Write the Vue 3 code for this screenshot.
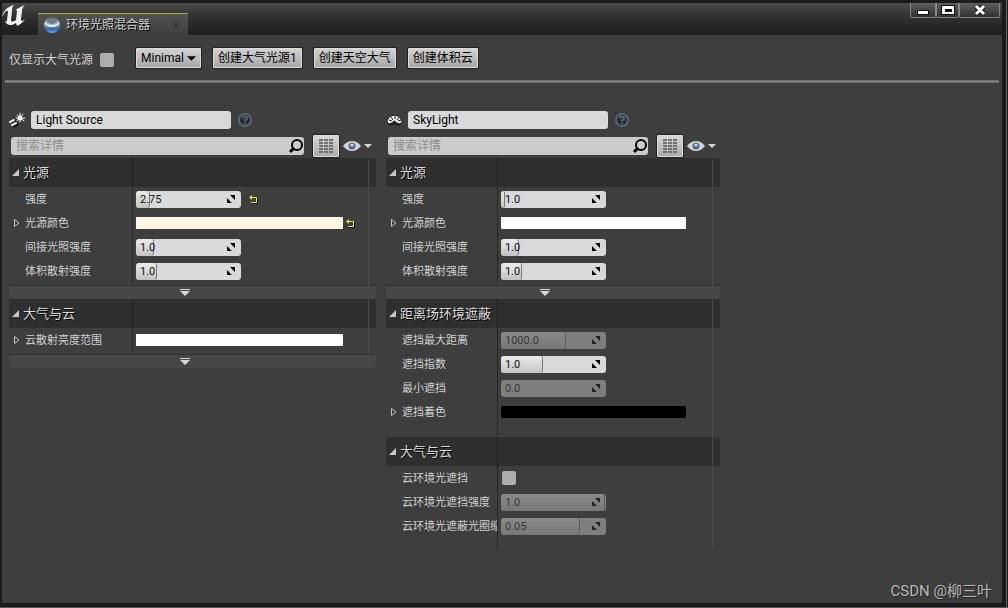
<script setup>
import { reactive, ref } from 'vue'

const onlyAtmosphere = ref(false)
const creators = ['创建大气光源1', '创建天空大气', '创建体积云']

const panels = reactive([
  {
    id: 'sun',
    name: 'Light Source',
    search: '',
    sections: [
      {
        title: '光源',
        more: true,
        rows: [
          { label: '强度', type: 'number', value: '2.75', fill: 13, reset: true },
          { label: '光源颜色', type: 'color', color: 'cream', expand: true, reset: true },
          { label: '间接光照强度', type: 'number', value: '1.0', fill: 17 },
          { label: '体积散射强度', type: 'number', value: '1.0', fill: 20 },
        ],
      },
      {
        title: '大气与云',
        more: true,
        rows: [{ label: '云散射亮度范围', type: 'color', color: 'white', expand: true }],
      },
    ],
  },
  {
    id: 'sky',
    name: 'SkyLight',
    search: '',
    sections: [
      {
        title: '光源',
        more: true,
        rows: [
          { label: '强度', type: 'number', value: '1.0', fill: 4 },
          { label: '光源颜色', type: 'color', color: 'white', expand: true },
          { label: '间接光照强度', type: 'number', value: '1.0', fill: 17 },
          { label: '体积散射强度', type: 'number', value: '1.0', fill: 20 },
        ],
      },
      {
        title: '距离场环境遮蔽',
        rows: [
          { label: '遮挡最大距离', type: 'number', value: '1000.0', fill: 62, disabled: true },
          { label: '遮挡指数', type: 'number', value: '1.0', fill: 40 },
          { label: '最小遮挡', type: 'number', value: '0.0', fill: 0, disabled: true },
          { label: '遮挡着色', type: 'color', color: 'black', expand: true },
        ],
      },
      {
        title: '大气与云',
        rows: [
          { label: '云环境光遮挡', type: 'check', value: false },
          { label: '云环境光遮挡强度', type: 'number', value: '1.0', fill: 99, disabled: true },
          { label: '云环境光遮蔽光圈缩放', type: 'number', value: '0.05', fill: 75, disabled: true },
        ],
      },
    ],
  },
])
</script>

<template>
  <div class="window">
    <header class="titlebar">
      <svg class="logo" viewBox="0 0 24 22" aria-hidden="true">
        <path d="M0 12C1 6 5 2 12 0C10 2 10 4 10 6L9 15C9 17 11 17 14 15L15 6C15 5 14 5 13 6C15 3 19 2 23 0C20 3 20 4 20 6L19 14C19 16 20 17 23 14C21 18 18 19 15 21L14 18C11 20 8 21 5 19C4 18 3 17 3 16C4 17 5 17 5 15L6 7C6 5 4 6 3 7C2 9 1 10 0 12Z" />
      </svg>
      <div class="tab">
        <svg class="orb" viewBox="0 0 16 16" aria-hidden="true">
          <defs>
            <linearGradient id="orb" x1="0" y1="0" x2="0" y2="1">
              <stop offset="0" stop-color="#4a5860" />
              <stop offset=".4" stop-color="#b9c7cf" />
              <stop offset=".55" stop-color="#6f9bd0" />
              <stop offset=".75" stop-color="#2c66b0" />
              <stop offset="1" stop-color="#7aa7de" />
            </linearGradient>
          </defs>
          <circle cx="8" cy="8" r="8" fill="url(#orb)" />
          <path d="M1 5Q1 10 8 10T15 5Q14 8 8 8T1 5Z" fill="#f0f5f9" />
          <ellipse cx="8" cy="4" rx="5" ry="3" fill="#6d7e88" />
        </svg>
        <span>环境光照混合器</span>
        <button class="tab-close" aria-label="关闭标签">
          <svg viewBox="0 0 8 8"><path d="M1 1L7 7M7 1L1 7" /></svg>
        </button>
      </div>
      <div class="controls">
        <button aria-label="最小化"><svg viewBox="0 0 14 12"><path d="M1 6h12v5H1z" fill="#111" /><path d="M2 7h10v3H2z" fill="#fff" /></svg></button>
        <button aria-label="最大化"><svg viewBox="0 0 14 12"><path d="M0 1h14v10H0z" fill="#111" /><path d="M1 2h12v8H1zM4 5v3h7V5z" fill="#fff" fill-rule="evenodd" /></svg></button>
        <button class="wide" aria-label="关闭"><svg viewBox="0 0 14 12"><path d="M3 2L11 10M11 2L3 10" stroke="#111" stroke-width="5" /><path d="M3 2L11 10M11 2L3 10" stroke="#fff" stroke-width="3" /></svg></button>
      </div>
    </header>

    <main class="body">
      <div class="toolbar">
        <label class="only">仅显示大气光源<input v-model="onlyAtmosphere" type="checkbox" class="check" /></label>
        <button class="btn">Minimal<svg class="down" viewBox="0 0 8 4"><path d="M0 0h8L4 4z" /></svg></button>
        <button v-for="c in creators" :key="c" class="btn">{{ c }}</button>
      </div>
      <hr class="rule" />

      <div class="panels">
        <section v-for="p in panels" :key="p.id" class="panel" :class="p.id">
          <div class="name-row">
            <svg v-if="p.id === 'sun'" class="kind" viewBox="0 0 17 16" aria-hidden="true">
              <g stroke="#111" stroke-width="4"><path d="M2 11L7 8M4 14L9 11" /></g>
              <g stroke="#eee" stroke-linecap="round">
                <path d="M1 10L5 8M3 13L7 11" stroke-width="2" />
                <path d="M11 1v9M7 6h9M8 3l7 6M14 2L8 9" stroke-width="1" />
              </g>
              <circle cx="11" cy="6" r="2.5" fill="#fff" />
            </svg>
            <svg v-else class="kind" viewBox="0 0 17 16" aria-hidden="true">
              <path d="M1 10C2 1 15 1 16 10L14 12Q8 9 3 12Z" fill="#f0f0f0" stroke="#151515" />
              <path d="M3 8l3 1M5 5l2 3M9 4v3M13 5l-2 3M15 8l-3 1" stroke="#222" stroke-width="1" />
              <path d="M6 11Q8 6 11 11" fill="#222" />
              <path d="M3 13Q8 11 14 13" stroke="#222" stroke-width="2" />
            </svg>
            <input v-model="p.name" class="name" :aria-label="'光源名称 ' + p.id" />
            <button class="help" aria-label="帮助">
              <svg viewBox="0 0 14 14"><circle cx="7" cy="7" r="6" /><path d="M5 5.5Q5 3.5 7 3.5T9 5.5Q9 6.5 7 7.5V8.5M7 9.5V11" /></svg>
            </button>
          </div>

          <div class="search-row">
            <div class="search">
              <input v-model="p.search" type="text" placeholder="搜索详情" aria-label="搜索详情" />
              <svg viewBox="0 0 16 16" aria-hidden="true"><circle cx="9" cy="7" r="5" /><path d="M6 10L2 14" stroke-width="3" /></svg>
            </div>
            <button class="matrix" aria-label="属性矩阵">
              <svg viewBox="0 0 14 15"><path v-for="y in 5" :key="y" :d="`M0 ${y * 3 - 2}h4M5 ${y * 3 - 2}h4M10 ${y * 3 - 2}h4`" /></svg>
            </button>
            <button class="view" aria-label="视图选项">
              <svg class="eye" viewBox="0 0 18 12"><path d="M0 6Q4 1 9 1T18 6Q14 11 9 11T0 6Z" fill="#d4d4d4" /><circle cx="9" cy="6" r="3.5" fill="#566b90" /><circle cx="9" cy="5" r="1.5" fill="#d8e0ee" /></svg>
              <svg class="drop" viewBox="0 0 8 4"><path d="M0 0h8L4 4z" /></svg>
            </button>
          </div>

          <div class="details">
            <div v-for="(s, i) in p.sections" :key="i" class="section" :class="{ open: !s.more }">
              <div class="group">
                <button class="section-head">
                  <svg viewBox="0 0 8 8"><path d="M7 0v7H0z" /></svg>{{ s.title }}
                </button>
                <div class="section-fill"></div>
              </div>
              <div class="rows">
                <div v-for="(r, j) in s.rows" :key="j" class="row">
                  <div class="label-cell">
                    <button v-if="r.expand" class="expander" :aria-label="'展开' + r.label">
                      <svg viewBox="0 0 6 8"><path d="M.5 .5v7L5 4z" /></svg>
                    </button>
                    <label :for="`${p.id}-${i}-${j}`">{{ r.label }}</label>
                  </div>
                  <div class="value-cell">
                    <div v-if="r.type === 'number'" class="number" :class="{ disabled: r.disabled }">
                      <div v-if="r.fill" class="fill" :style="{ width: r.fill + '%' }"></div>
                      <input :id="`${p.id}-${i}-${j}`" v-model="r.value" type="text" :disabled="r.disabled" />
                      <svg viewBox="0 0 8 8" aria-hidden="true"><path d="M3 0h5v5zM0 3v5h5z" /></svg>
                    </div>
                    <button v-else-if="r.type === 'color'" :id="`${p.id}-${i}-${j}`" class="swatch" :class="r.color"></button>
                    <input v-else :id="`${p.id}-${i}-${j}`" v-model="r.value" type="checkbox" class="check" />
                    <button v-if="r.reset" class="reset" :class="{ inset: r.type === 'color' }" aria-label="重置为默认值">
                      <svg viewBox="0 0 9 9"><path d="M2.5 8.5h6v-5" stroke="#111" /><path d="M2 7.5h5.5v-5H1" /><path d="M0 2.5L3 0v5z" class="tip" /></svg>
                    </button>
                  </div>
                </div>
              </div>
              <button v-if="s.more" class="more" aria-label="显示高级">
                <svg viewBox="0 0 10 7"><path d="M0 0h10v1H0zM0 2h10L5 7z" /></svg>
              </button>
            </div>
          </div>
        </section>
      </div>
      <div class="watermark">CSDN @柳三叶</div>
    </main>
  </div>
</template>

<style>
body {
  background: #101010;
}
</style>

<style scoped>
* {
  box-sizing: border-box;
}
button,
input {
  margin: 0;
  padding: 0;
  border: 0;
  font: inherit;
  color: inherit;
  background: none;
}
svg {
  display: block;
  flex: none;
  fill: none;
}
.window {
  min-height: 100vh;
  display: flex;
  flex-direction: column;
  padding: 3px 6px 5px 2px;
  background: linear-gradient(#686868, #686868) right 1px top 0 / 1px 100% no-repeat,
    linear-gradient(#555, #555) 0 100% / 100% 1px no-repeat, #1b1b1b;
  color: #d0d0d0;
  font-family: Roboto, "Noto Sans CJK SC", sans-serif;
  font-size: 12px;
  line-height: 16px;
}
.titlebar {
  height: 32px;
  display: flex;
  align-items: flex-end;
  background: linear-gradient(#4a4a4a, #353535 35%, #242424 75%, #202020);
}
.logo {
  width: 24px;
  height: 22px;
  align-self: flex-start;
  margin-top: 2px;
}
.logo path {
  fill: #f4f4f4;
}
.tab {
  width: 150px;
  height: 22px;
  margin-left: 12px;
  padding: 0 8px 0 6px;
  display: flex;
  align-items: center;
  gap: 6px;
  border-top: 1px solid #b8a63c;
  background: linear-gradient(#525252, #3e3e3e);
  text-shadow: 1px 1px #000;
}
.orb {
  width: 16px;
  height: 16px;
}
.tab-close {
  margin-left: auto;
}
.tab-close svg {
  width: 8px;
  height: 8px;
  stroke: #292929;
}
.controls {
  margin-left: auto;
  margin-right: 2px;
  align-self: flex-start;
  display: flex;
}
.controls button {
  width: 26px;
  height: 15px;
  display: flex;
  justify-content: center;
  border: 1px solid #858585;
  border-top: 0;
  border-radius: 0 0 2px 2px;
  background: linear-gradient(#606060, #303030);
}
.controls button + button {
  width: 23px;
}
.controls button.wide {
  width: 41px;
}
.controls svg {
  width: 14px;
  height: 12px;
  margin-top: 1px;
}
.body {
  position: relative;
  flex: 1;
  background: #3e3e3e;
}
.toolbar {
  display: flex;
  align-items: center;
  gap: 10px;
  padding: 12px 7px 10px;
}
.only {
  display: flex;
  align-items: center;
  gap: 7px;
  margin-right: 11px;
  padding-top: 3px;
}
.check {
  appearance: none;
  width: 14px;
  height: 14px;
  border-radius: 2px;
  background: #adadad;
}
.btn {
  height: 22px;
  padding: 0 5px;
  display: flex;
  align-items: center;
  gap: 3px;
  border: 1px solid #222;
  border-radius: 2px;
  color: #000;
  background: linear-gradient(#d4d4d4, #a5a5a5);
  box-shadow: inset 0 0 0 1px #ddd;
  white-space: nowrap;
}
.down {
  width: 9px;
  height: 5px;
}
.down path {
  fill: #000;
}
.rule {
  height: 3px;
  margin: 1px 3px 0;
  border: 0;
  background: linear-gradient(#666, #858585, #5a5a5a);
}
.panels {
  display: grid;
  grid-template-columns: 367fr 334fr 272fr;
  gap: 10px;
  padding: 28px 0 0 7px;
}
.panel {
  min-width: 0;
}
.name-row {
  display: flex;
  align-items: center;
  height: 18px;
}
.kind {
  width: 17px;
  height: 16px;
}
.name {
  width: 200px;
  height: 18px;
  margin: 0 7px 0 5px;
  padding: 0 5px;
  border-radius: 3px;
  background: #d9d9d9;
  color: #000;
}
.help svg {
  width: 14px;
  height: 14px;
  stroke: #5a6676;
  stroke-width: 2;
}
.help circle {
  fill: #272b31;
}
.search-row {
  display: flex;
  align-items: center;
  height: 24px;
  margin: 5px 4px 0 2px;
}
.search {
  flex: 1;
  display: flex;
  align-items: center;
  height: 18px;
  padding-left: 5px;
  border-radius: 3px;
  background: #cbcbcb;
  color: #111;
}
.search input {
  flex: 1;
  min-width: 0;
}
.search input::placeholder {
  color: #8d8d8d;
  opacity: 1;
}
.search svg {
  width: 16px;
  height: 16px;
  stroke: #000;
  stroke-width: 2;
}
.matrix {
  width: 28px;
  height: 24px;
  margin: 0 3px 0 8px;
  display: grid;
  place-items: center;
  border: 1px solid #222;
  border-radius: 2px;
  background: linear-gradient(#d8d8d8, #a8a8a8);
  box-shadow: inset 0 0 0 1px #ddd;
}
.matrix svg {
  width: 14px;
  height: 15px;
  stroke: #707070;
  stroke-width: 2;
}
.view {
  display: flex;
  align-items: center;
  gap: 3px;
}
.eye {
  width: 18px;
  height: 12px;
}
.drop {
  width: 8px;
  height: 4px;
}
.drop path,
.more path {
  fill: #d6d6d6;
}
.details {
  position: relative;
}
.details::after {
  content: "";
  position: absolute;
  top: 2px;
  right: 7px;
  bottom: 2px;
  width: 1px;
  background: #4a4a4a;
}
.group {
  display: flex;
  height: 29px;
  border-radius: 3px 3px 0 0;
  background: #2f2f2f;
}
.section-head {
  width: 124px;
  display: flex;
  align-items: center;
  gap: 3px;
  padding-left: 3px;
  border-right: 1px solid #202020;
  color: #dadada;
  font-size: 13px;
  text-shadow: 1px 1px #000;
  white-space: nowrap;
}
.section-head svg {
  width: 8px;
  height: 8px;
}
.section-head path {
  fill: #c8c8c8;
}
.section-fill {
  flex: 1;
}
.row {
  display: flex;
  height: 24px;
  font-size: 11px;
}
.label-cell {
  position: relative;
  width: 124px;
  padding: 2px 0 0 16px;
  display: flex;
  align-items: center;
  border-right: 1px solid #262626;
  overflow: hidden;
  white-space: nowrap;
}
.sky .label-cell,
.sky .section-head {
  width: 112px;
}
.expander {
  position: absolute;
  left: 5px;
  top: 8px;
}
.expander svg {
  width: 6px;
  height: 8px;
  stroke: #c4c4c4;
}
.value-cell {
  flex: 1;
  min-width: 0;
  display: flex;
  align-items: center;
  padding-left: 3px;
}
.number {
  position: relative;
  width: 105px;
  height: 17px;
  display: flex;
  align-items: center;
  padding-right: 6px;
  border-radius: 3px;
  overflow: hidden;
  background: #d9d9d9;
  color: #111;
}
.fill {
  position: absolute;
  inset: 0 auto 0 0;
  border-right: 1px solid #777;
  border-radius: 3px;
  background: linear-gradient(#ececec, #c2c2c2);
}
.number input {
  position: relative;
  flex: 1;
  min-width: 0;
  height: 17px;
  padding-left: 4px;
}
.number svg {
  position: relative;
  width: 8px;
  height: 8px;
}
.number path {
  fill: #000;
}
.number.disabled {
  background: #7f7f7f;
  color: #383838;
}
.disabled .fill {
  border-color: #5c5c5c;
  background: linear-gradient(#8a8a8a, #777);
}
.disabled path {
  fill: #222;
}
.swatch {
  flex: 1;
  height: 12px;
  margin-right: 33px;
}
.sky .swatch {
  margin-right: 34px;
}
.cream {
  background: #fff7e2;
}
.white {
  background: #fff;
}
.black {
  background: #000;
}
.reset {
  margin-left: 8px;
}
.reset.inset {
  margin-left: -30px;
  margin-right: 21px;
}
.reset svg {
  width: 9px;
  height: 9px;
  stroke: #e8e840;
}
.reset .tip {
  fill: #e8e840;
  stroke: none;
}
.more {
  width: 100%;
  height: 14px;
  margin-top: 2px;
  padding-right: 16px;
  display: grid;
  place-items: center;
  border-top: 1px solid #303030;
  border-radius: 0 0 3px 3px;
  background: #474747;
}
.more svg {
  width: 10px;
  height: 7px;
}
.open .rows::after {
  content: "";
  display: block;
  width: 111px;
  height: 11px;
  border-right: 1px solid #262626;
}
.open + .open {
  margin-top: 2px;
}
.sky .value-cell .check {
  margin-left: 1px;
}
.watermark {
  position: absolute;
  right: 10px;
  bottom: 1px;
  color: #b8b8b8;
  font-size: 15px;
  line-height: 22px;
  text-shadow: 1px 1px #222;
}
</style>
